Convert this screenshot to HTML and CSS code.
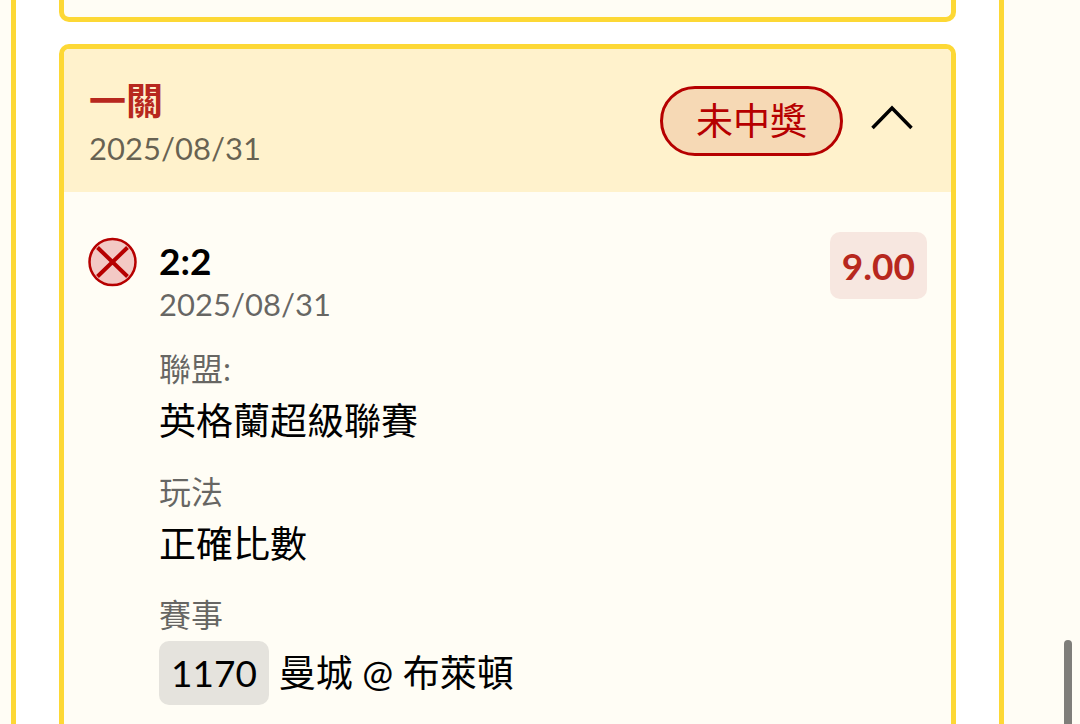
FILE: index.html
```html
<!DOCTYPE html>
<html lang="zh-Hant">
<head>
    <meta charset="UTF-8">
    <meta name="viewport" content="width=device-width, initial-scale=1">
    <title>投注紀錄</title>
    <link rel="stylesheet" href="styles.css">
</head>
<body>
    <main class="panel">
        <section class="card card-prev"></section>

        <section class="card">
            <header class="card-header">
                <div class="card-heading">
                    <h2 class="card-title">一關</h2>
                    <time class="date" datetime="2025-08-31">2025/08/31</time>
                </div>
                <span class="status">未中獎</span>
                <button class="toggle" type="button" aria-label="收合" aria-expanded="true">
                    <svg width="44" height="28" viewBox="0 0 44 28">
                        <path d="M1.5 25 L21 5 L40.5 25" fill="none" stroke="#000" stroke-width="3.5"/>
                    </svg>
                </button>
            </header>

            <div class="bet">
                <svg class="bet-icon" width="50" height="50" viewBox="0 0 50 50">
                    <circle cx="24.5" cy="25" r="23" fill="#f3c9c5" stroke="#b60000" stroke-width="2.5"/>
                    <path d="M9.5 10.5 L39.5 39.5 M39.5 10.5 L9.5 39.5" stroke="#b60000" stroke-width="4"/>
                </svg>
                <div class="bet-info">
                    <h3 class="bet-pick">2:2</h3>
                    <time class="date" datetime="2025-08-31">2025/08/31</time>
                    <dl class="details">
                        <div class="detail">
                            <dt>聯盟:</dt>
                            <dd>英格蘭超級聯賽</dd>
                        </div>
                        <div class="detail">
                            <dt>玩法</dt>
                            <dd>正確比數</dd>
                        </div>
                        <div class="detail">
                            <dt>賽事</dt>
                            <dd class="match"><span class="match-no">1170</span><span>曼城 @ 布萊頓</span></dd>
                        </div>
                    </dl>
                </div>
                <span class="odds">9.00</span>
            </div>
        </section>
    </main>
    <div class="scroll-thumb"></div>
</body>
</html>
```
FILE: styles.css
```css
* {
    box-sizing: border-box;
}

body {
    margin: 0;
    height: 100vh;
    overflow: hidden;
    background-color: #fffdf5;
    color: #000;
    font-family: Lato, "Noto Sans CJK TC", sans-serif;
    font-size: 37px;
}

h2, h3, dl, dd {
    margin: 0;
}

.panel {
    display: flex;
    flex-direction: column;
    gap: 22px;
    min-height: 100vh;
    margin: 0 76px 0 11px;
    padding: 0 43px;
    border: solid #fdd835;
    border-width: 0 5px;
    background-color: #fff;
}

.card {
    border: 5px solid #fdd835;
    border-radius: 10px;
    background-color: #fffdf5;
    overflow: hidden;
}

/* tail of the previous card */
.card-prev {
    height: 22px;
    flex-shrink: 0;
    border-top: 0;
    border-top-left-radius: 0;
    border-top-right-radius: 0;
}

.card-header {
    display: flex;
    align-items: center;
    padding: 25px 36px 24px 25px;
    background-color: #fff2cc;
}

.card-heading {
    flex: 1;
}

.card-title {
    color: #b7281e;
    font-size: 37px;
    font-weight: bold;
    line-height: 54px;
}

.date {
    display: block;
    color: rgba(0, 0, 0, 0.6);
    font-size: 31px;
    line-height: 40px;
}

.status {
    padding: 0 33px;
    border: 3px solid #b60000;
    border-radius: 35px;
    background-color: #f6d9b5;
    color: #b60000;
    line-height: 64px;
}

.toggle {
    display: flex;
    margin-left: 28px;
    padding: 0 0 8px;
    border: 0;
    background: none;
    cursor: pointer;
}

.bet {
    display: flex;
    align-items: flex-start;
    padding: 40px 24px;
}

.bet-icon {
    margin-top: 5px;
}

.bet-info {
    flex: 1;
    margin: 6px 0 0 21px;
}

.bet-pick {
    font-size: 37px;
    font-weight: bold;
    line-height: 46px;
}

.details {
    display: flex;
    flex-direction: column;
    gap: 18px;
    margin-top: 22px;
}

.detail dt {
    color: rgba(0, 0, 0, 0.6);
    font-size: 32px;
    line-height: 45px;
}

.detail dd {
    line-height: 60px;
}

.detail .match {
    display: flex;
    align-items: center;
    gap: 10px;
    margin-top: 4px;
    line-height: 64px;
}

.match-no {
    padding: 0 12px;
    border-radius: 10px;
    background-color: #e5e3dd;
}

.odds {
    padding: 0 12px;
    border-radius: 10px;
    background-color: #f7e7e0;
    color: #b7281e;
    font-weight: bold;
    line-height: 67px;
}

.scroll-thumb {
    position: fixed;
    right: 8px;
    bottom: -10px;
    width: 8px;
    height: 94px;
    border-radius: 4px;
    background-color: #7f7e7a;
}
```
